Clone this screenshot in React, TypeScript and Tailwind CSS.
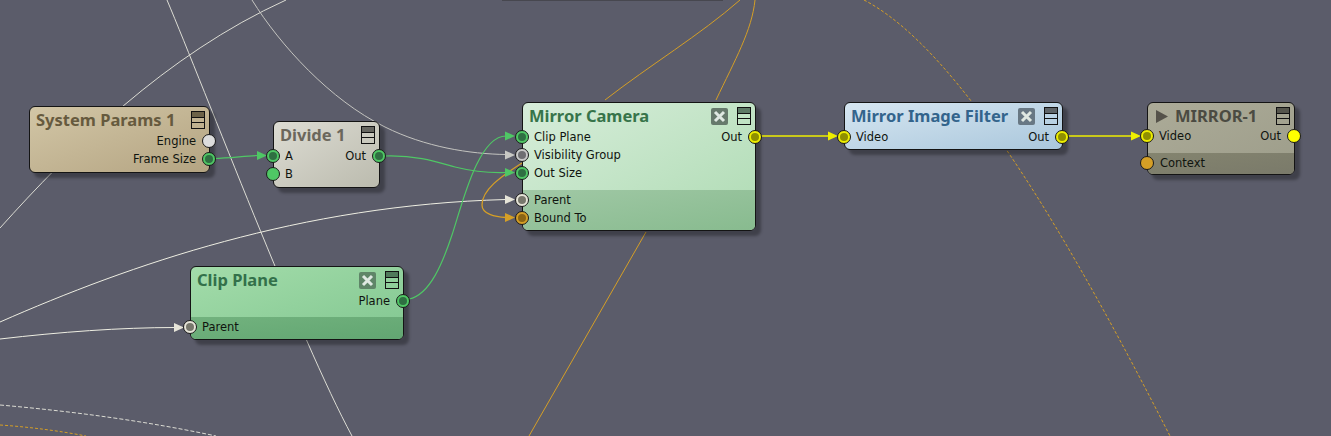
import type { ReactNode } from "react";

const GREEN = "#4fc765";
const WHITE = "#e6e4d8";
const ORANGE = "#d59f26";
const YELLOW = "#eeee00";

type PortProps = {
    side: "in" | "out";
    ring: string;
    core?: string;
};

const Port = ({ side, ring, core }: PortProps) => (
    <span
        className={`absolute top-[2px] flex size-[14px] items-center justify-center rounded-full border border-[#1a1a1a] ${ring} ${
            side === "in" ? "-left-[8px]" : "-right-[7px]"
        }`}
    >
        {core && <span className={`size-[8px] rounded-full ${core}`} />}
    </span>
);

const Row = (props: {
    label: string;
    ring: string;
    core?: string;
    out?: { label: string; ring: string; core?: string };
    right?: boolean;
    indent?: string;
}) => (
    <div className="relative flex h-[18px] items-center justify-between pl-[11px] pr-[13px] text-[11.5px] leading-[18px] text-[#10140f]">
        {props.right ? (
            <>
                <span />
                <span>{props.label}</span>
                <Port side="out" ring={props.ring} core={props.core} />
            </>
        ) : (
            <>
                <span className={props.indent}>{props.label}</span>
                <Port side="in" ring={props.ring} core={props.core} />
            </>
        )}
        {props.out && (
            <>
                <span>{props.out.label}</span>
                <Port side="out" ring={props.out.ring} core={props.out.core} />
            </>
        )}
    </div>
);

const MenuIcon = (props: { band: string }) => (
    <span className="flex h-[18px] w-[14px] shrink-0 flex-col border border-[#111]">
        <span className={`h-[6px] border-b border-[#111] ${props.band}`} />
        <span className="h-[5px] border-b border-[#111]" />
        <span className="h-[5px]" />
    </span>
);

const CloseIcon = (props: { tone: string }) => (
    <span
        className={`flex size-[17px] shrink-0 items-center justify-center rounded-[2px] ${props.tone}`}
    >
        <svg viewBox="0 0 17 17" className="size-[17px]">
            <path d="M4 4 L13 13 M13 4 L4 13" stroke="#dfe8e2" strokeWidth="3" />
        </svg>
    </span>
);

const Node = (props: {
    className: string;
    title: string;
    titleColor: string;
    band: string;
    closeTone?: string;
    children: ReactNode;
    lower?: ReactNode;
    lowerClass?: string;
    bodyClass?: string;
    prefix?: boolean;
}) => (
    <div
        className={`absolute flex flex-col rounded-[6px] border border-[#141414] shadow-[5px_5px_3px_rgba(0,0,0,0.3)] ${props.className}`}
    >
        <div className="flex h-[25px] items-start justify-between pl-[6px] pr-[4px] pt-[3px]">
            <span
                className={`flex items-center font-['Noto_Sans'] text-[16.5px] leading-[20px] font-bold whitespace-nowrap ${props.titleColor}`}
            >
                {props.prefix && (
                    <svg width="12" height="13" viewBox="0 0 12 13" className="ml-[2px] mr-[7px]">
                        <polygon points="0,0 12,6.5 0,13" fill="#55524a" />
                    </svg>
                )}
                {props.title}
            </span>
            <span className="mt-[1px] flex items-center gap-[9px]">
                {props.closeTone && <CloseIcon tone={props.closeTone} />}
                <MenuIcon band={props.band} />
            </span>
        </div>
        <div className={`flex flex-1 flex-col ${props.bodyClass ?? ""}`}>{props.children}</div>
        {props.lower && (
            <div className={`flex flex-col rounded-b-[5px] pt-[1px] ${props.lowerClass ?? ""}`}>
                {props.lower}
            </div>
        )}
    </div>
);

const Wires = () => (
    <svg className="absolute inset-0" width="1331" height="436" fill="none">
        {/* long white links */}
        <g stroke="#dcdcd4" strokeWidth="1">
            <path d="M0 228 C70 150 165 55 286 0" />
            <path d="M167 0 C205 90 300 340 352 436" />
            <path d="M252 0 C280 45 330 100 385 127 C425 147 470 154 506 154.5" stroke="#c4c4c0" />
            <path d="M0 322 C130 265 300 205 506 199.5" stroke="#eeeee2" />
            <path d="M0 339 C60 332 120 327.5 176 327.5" stroke="#eeeee2" />
            <path d="M0 405 C80 412 150 422 216 436" strokeDasharray="4 2" />
        </g>

        {/* orange links */}
        <g stroke={ORANGE} strokeWidth="1">
            <path d="M529 436 L646 232" />
            <path d="M605 100 C650 65 700 35 740 0" />
            <path d="M716 100 C735 60 752 30 755 0" />
            <path d="M864 0 C960 50 1070 240 1170 436" strokeDasharray="3 2" />
            <path d="M0 425 C30 427 60 431 86 436" strokeDasharray="3 2" />
            <path d="M522 163 C500 177 482 190 482 205 C482 214 495 217 506 217.5" strokeWidth="1.3" />
        </g>

        {/* green links */}
        <g stroke={GREEN} strokeWidth="1.2">
            <path d="M214 158.5 C230 158 245 156 258 155.5" />
            <path d="M385 156 C420 155 440 163 455 167 C475 172 490 173 506 172.5" />
            <path d="M409 299 C430 295 443 262 452 235 C462 205 478 136 506 136" />
        </g>

        {/* yellow links */}
        <g stroke={YELLOW} strokeWidth="1.4">
            <path d="M760 136 H830" />
            <path d="M1068 136 H1133" />
        </g>

        {/* arrow heads */}
        <polygon points="257,151 267,155.5 257,160" fill={GREEN} />
        <polygon points="505,131.5 515,136 505,140.5" fill={GREEN} />
        <polygon points="505,168 515,172.5 505,177" fill={GREEN} />
        <polygon points="505,150.5 515,155 505,159.5" fill="#c8c8c4" />
        <polygon points="505,195 515,199.5 505,204" fill={WHITE} />
        <polygon points="505,213 515,217.5 505,222" fill={ORANGE} />
        <polygon points="174,323 184,327.5 174,332" fill={WHITE} />
        <polygon points="828,131.5 838,136 828,140.5" fill={YELLOW} />
        <polygon points="1131,131.5 1141,136 1131,140.5" fill={YELLOW} />
    </svg>
);

const App = () => {
    return (
        <div className="relative h-[436px] w-[1331px] overflow-hidden bg-[#5b5c6a] font-['DejaVu_Sans']">
            <div className="absolute left-[502px] top-0 h-[1px] w-[221px] bg-[#47474f]" />
            <Wires />

            <Node
                className="left-[29px] top-[106px] h-[67px] w-[181px] bg-gradient-to-br from-[#d2c6a6] to-[#b4a482]"
                title="System Params 1"
                titleColor="text-[#665a3e]"
                band="bg-[#6c6248]"
            >
                <Row right label="Engine" ring="bg-[#dcdcdc]" />
                <Row right label="Frame Size" ring="bg-[#4fc765]" core="bg-[#2f6f42]" />
            </Node>

            <Node
                className="left-[273px] top-[121px] h-[67px] w-[107px] bg-gradient-to-br from-[#dddcd3] to-[#bbbbae]"
                title="Divide 1"
                titleColor="text-[#6b675c]"
                band="bg-[#666660]"
            >
                <Row label="A" ring="bg-[#4fc765]" core="bg-[#2f6f42]" out={{ label: "Out", ring: "bg-[#4fc765]", core: "bg-[#2f6f42]" }} />
                <Row label="B" ring="bg-[#4fc765]" />
            </Node>

            <Node
                className="left-[522px] top-[102px] h-[129px] w-[234px] bg-gradient-to-br from-[#d7edda] to-[#aedbb3]"
                title="Mirror Camera"
                titleColor="text-[#37744a]"
                band="bg-[#5e7a66]"
                closeTone="bg-[#66796c]"
                bodyClass="pb-[8px]"
                lowerClass="bg-gradient-to-br from-[#a0c8a5] to-[#88bb8f] h-[41px]"
                lower={
                    <>
                        <Row label="Parent" ring="bg-[#e6e4d8]" core="bg-[#77776c]" />
                        <Row label="Bound To" ring="bg-[#d59f26]" core="bg-[#8a6414]" />
                    </>
                }
            >
                <Row label="Clip Plane" ring="bg-[#4fc765]" core="bg-[#2f6f42]" out={{ label: "Out", ring: "bg-[#eeee00]", core: "bg-[#8f8f00]" }} />
                <Row label="Visibility Group" ring="bg-[#c8c8c8]" core="bg-[#6e6e72]" />
                <Row label="Out Size" ring="bg-[#4fc765]" core="bg-[#2f6f42]" />
            </Node>

            <Node
                className="left-[844px] top-[102px] h-[48px] w-[219px] bg-gradient-to-br from-[#d6e6f1] to-[#aac7dc]"
                title="Mirror Image Filter"
                titleColor="text-[#33648c]"
                band="bg-[#5e6468]"
                closeTone="bg-[#687884]"
            >
                <Row label="Video" ring="bg-[#eeee00]" core="bg-[#8f8f00]" out={{ label: "Out", ring: "bg-[#eeee00]", core: "bg-[#8f8f00]" }} />
            </Node>

            <Node
                className="left-[1147px] top-[102px] h-[73px] w-[148px] bg-gradient-to-br from-[#acab98] to-[#9d9d8a]"
                title="MIRROR-1"
                titleColor="text-[#4b4b42]"
                band="bg-[#55554c]"
                prefix
                lowerClass="bg-gradient-to-br from-[#84846f] to-[#7a7a6a] h-[21px]"
                bodyClass="pb-[8px]"
                lower={<Row label="Context" ring="bg-[#d59f26]" indent="ml-[1px]" />}
            >
                <Row label="Video" ring="bg-[#eeee00]" core="bg-[#8f8f00]" out={{ label: "Out", ring: "bg-[#ffff00]" }} />
            </Node>

            <Node
                className="left-[190px] top-[266px] h-[74px] w-[214px] bg-gradient-to-br from-[#a3dcaa] to-[#82c791]"
                title="Clip Plane"
                titleColor="text-[#33704a]"
                band="bg-[#4f7a5a]"
                closeTone="bg-[#5f8568]"
                lowerClass="bg-gradient-to-br from-[#72b27e] to-[#62a672] h-[22px]"
                lower={<Row label="Parent" ring="bg-[#e6e4d8]" core="bg-[#77776c]" />}
            >
                <Row right label="Plane" ring="bg-[#4fc765]" core="bg-[#2f6f42]" />
            </Node>
        </div>
    );
};

export default App;
